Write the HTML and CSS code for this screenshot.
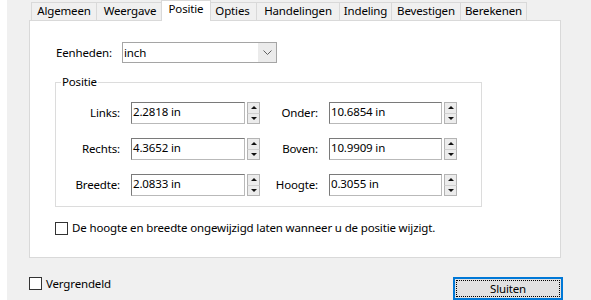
FILE: index.html
```html
<!DOCTYPE html>
<html lang="nl">
<head>
<meta charset="utf-8">
<title>Positie</title>
<link rel="stylesheet" href="styles.css">
</head>
<body>
<div class="dialog">
  <div class="tabs">
    <div class="tab t1">Algemeen</div>
    <div class="tab t2">Weergave</div>
    <div class="tab t3 active">Positie</div>
    <div class="tab t4">Opties</div>
    <div class="tab t5">Handelingen</div>
    <div class="tab t6">Indeling</div>
    <div class="tab t7">Bevestigen</div>
    <div class="tab t8">Berekenen</div>
  </div>
  <div class="panel">
    <div class="units-row">
      <span class="units-label">Eenheden:</span>
      <div class="select">
        <span class="select-value">inch</span>
        <span class="select-arrow"><svg width="9" height="5" viewBox="0 0 9 5"><polyline points="0.5,0.5 4.5,4.5 8.5,0.5" fill="none" stroke="#606060" stroke-width="1"/></svg></span>
      </div>
    </div>
    <fieldset class="group">
      <legend class="group-title">Positie</legend>
      <div class="fields">
        <span class="label">Links:</span>
        <div class="field"><span class="input">2.2818 in</span><span class="spin"><span class="spin-btn up"></span><span class="spin-btn down"></span></span></div>
        <span class="label">Onder:</span>
        <div class="field"><span class="input">10.6854 in</span><span class="spin"><span class="spin-btn up"></span><span class="spin-btn down"></span></span></div>

        <span class="label">Rechts:</span>
        <div class="field"><span class="input">4.3652 in</span><span class="spin"><span class="spin-btn up"></span><span class="spin-btn down"></span></span></div>
        <span class="label">Boven:</span>
        <div class="field"><span class="input">10.9909 in</span><span class="spin"><span class="spin-btn up"></span><span class="spin-btn down"></span></span></div>

        <span class="label">Breedte:</span>
        <div class="field"><span class="input">2.0833 in</span><span class="spin"><span class="spin-btn up"></span><span class="spin-btn down"></span></span></div>
        <span class="label">Hoogte:</span>
        <div class="field"><span class="input">0.3055 in</span><span class="spin"><span class="spin-btn up"></span><span class="spin-btn down"></span></span></div>
      </div>
    </fieldset>
    <div class="check keep">
      <span class="box"></span>
      <span class="check-text">De hoogte en breedte ongewijzigd laten wanneer u de positie wijzigt.</span>
    </div>
  </div>
  <div class="footer">
    <div class="check">
      <span class="box"></span>
      <span class="check-text">Vergrendeld</span>
    </div>
    <button class="btn">Sluiten</button>
  </div>
</div>
</body>
</html>
```
FILE: styles.css
```css
html, body {
  margin: 0;
  padding: 0;
  background: #ffffff;
}
body {
  font-family: "Noto Sans", "Open Sans", sans-serif;
  font-size: 11.5px;
  letter-spacing: -0.15px;
  line-height: 16px;
  color: #000;
}
.dialog {
  margin-left: 7px;
  width: 584px;
  height: 300px;
  background: #f0f0f0;
  padding-left: 22px;
  box-sizing: border-box;
  overflow: hidden;
}
.tabs {
  display: flex;
  padding-left: 2px;
  padding-top: 2px;
  height: 20px;
  box-sizing: border-box;
  position: relative;
  z-index: 2;
}
.tab {
  flex: none;
  height: 18px;
  box-sizing: border-box;
  border: 1px solid #d9d9d9;
  border-bottom: none;
  background: #f0f0f0;
  text-align: center;
  line-height: 16px;
  margin-left: -1px;
  white-space: nowrap;
}
.tab.t1 { margin-left: 0; width: 66px; }
.tab.t2 { width: 68px; }
.tab.t3 { width: 46px; }
.tab.t4 { width: 49px; }
.tab.t5 { width: 84px; }
.tab.t6 { width: 53px; }
.tab.t7 { width: 70px; }
.tab.t8 { width: 67px; }
.tab.active {
  background: #ffffff;
  height: 21px;
  margin-top: -2px;
  margin-left: -3px;
  margin-right: -2px;
  width: 50px;
  line-height: 15px;
  position: relative;
  z-index: 3;
}
.panel {
  width: 532px;
  height: 238px;
  box-sizing: border-box;
  border: 1px solid #d9d9d9;
  background: #ffffff;
  padding: 21px 0 0 25px;
}
.units-row {
  display: flex;
  align-items: center;
  height: 21px;
}
.units-label {
  width: 67px;
  padding-left: 1px;
  box-sizing: border-box;
}
.select {
  display: flex;
  width: 155px;
  height: 21px;
  box-sizing: border-box;
  border: 1px solid #a5a5a5;
  background: #ebebeb;
}
.select-value {
  flex: 1;
  background: #ffffff;
  padding-left: 1px;
  line-height: 19px;
}
.select-arrow {
  width: 18px;
  display: flex;
  align-items: center;
  justify-content: center;
}
.select-arrow svg { display: block; }
.group {
  margin: 11px 0 0 0;
  padding: 0;
  width: 427px;
  box-sizing: border-box;
  border: 1px solid #dcdcdc;
  min-width: 0;
}
.group-title {
  margin-left: 5px;
  padding: 0 1px;
  line-height: 16px;
}
.fields {
  display: grid;
  grid-template-columns: 75px 129px 69px 128px;
  grid-auto-rows: 22px;
  row-gap: 14px;
  padding: 12px 0 10px 0;
}
.label {
  text-align: right;
  padding-right: 11px;
  line-height: 22px;
}
.field {
  display: flex;
  gap: 2px;
}
.input {
  flex: 1;
  box-sizing: border-box;
  border: 1px solid;
  border-color: #7a7a7a #b9b9b9 #b9b9b9 #7a7a7a;
  background: #fff;
  padding-left: 1px;
  line-height: 18px;
  white-space: nowrap;
}
.spin {
  width: 13px;
  display: flex;
  flex-direction: column;
}
.spin-btn {
  flex: 1;
  box-sizing: border-box;
  border: 1px solid #b4b4b4;
  background: #ececec;
  display: flex;
  align-items: center;
  justify-content: center;
}
.spin-btn.up { border-bottom-color: #d0d0d0; }
.spin-btn.down { border-top: none; }
.spin-btn::before {
  content: "";
  width: 0;
  height: 0;
  border-left: 3px solid transparent;
  border-right: 3px solid transparent;
}
.spin-btn.up::before { border-bottom: 3px solid #111; }
.spin-btn.down::before { border-top: 3px solid #111; }
.check {
  display: flex;
  align-items: center;
  gap: 4px;
}
.check.keep {
  margin-top: 13px;
  height: 16px;
}
.box {
  width: 13px;
  height: 13px;
  box-sizing: border-box;
  border: 1px solid #333333;
  background: #ffffff;
  flex: none;
}
.footer {
  display: flex;
  justify-content: space-between;
  align-items: flex-start;
  width: 534px;
  margin-top: 19px;
}
.footer .check {
  height: 13px;
}
.btn {
  position: relative;
  width: 110px;
  height: 23px;
  margin: 0;
  padding: 0;
  border: 1px solid #0078d7;
  box-shadow: inset 0 0 0 1px #0078d7;
  background: #e1e1e1;
  font-family: inherit;
  font-size: 11.5px;
  letter-spacing: -0.15px;
  line-height: 16px;
  color: #000;
}
.btn::after {
  content: "";
  position: absolute;
  inset: 2px;
  border: 1px dotted #000;
}
```
